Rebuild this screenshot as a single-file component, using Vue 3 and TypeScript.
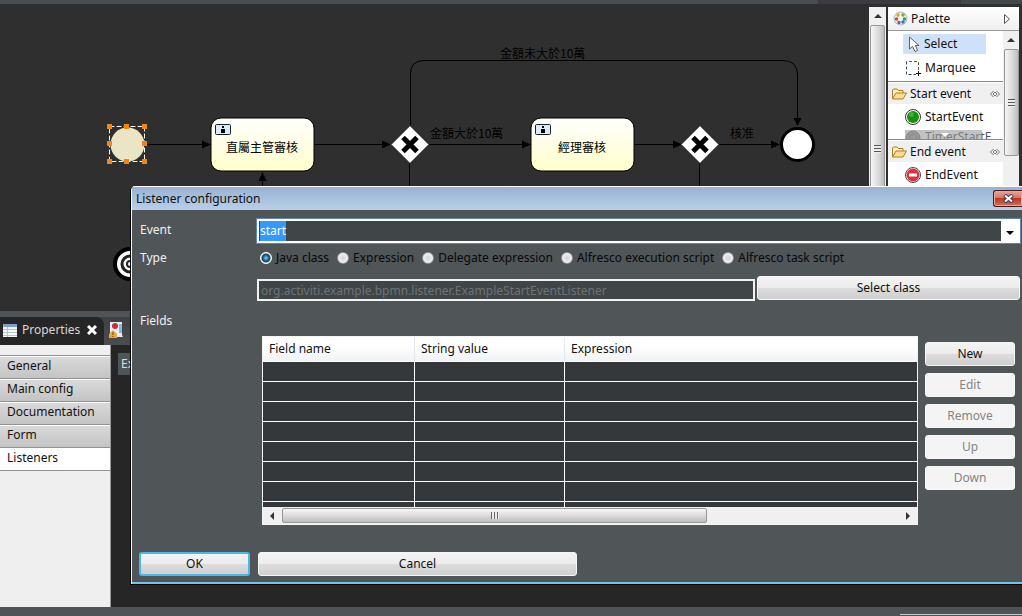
<script setup lang="ts">
import { onMounted, ref } from 'vue'

const eventName = ref('start')
const eventInput = ref<HTMLInputElement | null>(null)
const listenerType = ref('Java class')
const className = ref('org.activiti.example.bpmn.listener.ExampleStartEventListener')

const listenerTypes: string[] = [
  'Java class',
  'Expression',
  'Delegate expression',
  'Alfresco execution script',
  'Alfresco task script',
]
const sections: string[] = ['General', 'Main config', 'Documentation', 'Form', 'Listeners']
const columns: string[] = ['Field name', 'String value', 'Expression']
const actions: { label: string; enabled: boolean }[] = [
  { label: 'New', enabled: true },
  { label: 'Edit', enabled: false },
  { label: 'Remove', enabled: false },
  { label: 'Up', enabled: false },
  { label: 'Down', enabled: false },
]
const handles: [number, number][] = [
  [109, 126], [126, 126], [144, 126],
  [109, 143], [144, 143],
  [109, 161], [126, 161], [144, 161],
]
const tasks: { x: number; label: string }[] = [
  { x: 211, label: '直屬主管審核' },
  { x: 531, label: '經理審核' },
]
const gateways: number[] = [410, 700]
const arrows: string[] = [
  'M211 144.500l-9-4v8z', 'M391 144.500l-9-4v8z', 'M531 144.500l-9-4v8z',
  'M682 144.500l-9-4v8z', 'M780 144.500l-9-4v8z', 'M797.500 126l-4-8h8z', 'M262.500 172l-4 9h8z',
]

onMounted(() => {
  eventInput.value?.focus()
  eventInput.value?.select()
})
</script>

<template>
  <div class="workbench">
    <div class="top-strip"></div>
    <main class="editor">
      <svg class="canvas" role="img" aria-label="Process diagram">
        <defs>
          <linearGradient id="taskFill" x1="0" y1="0" x2="0" y2="1">
            <stop offset="0" stop-color="#ffffff" />
            <stop offset="1" stop-color="#ffffcc" />
          </linearGradient>
        </defs>
        <g transform="translate(0 -4)">
          <g fill="none" stroke="#000">
            <path d="M145 144.500H205M315 144.500H385M428 144.500H525M635 144.500H676M718 144.500H775" />
            <path d="M410.500 126V74Q410.500 60.500 424 60.500H783Q797.500 60.500 797.500 75V120" />
            <path d="M409.500 162V200M699.500 162V200M262.500 178V200" />
          </g>
          <path v-for="a in arrows" :key="a" :d="a" />
          <circle cx="127.500" cy="144.500" r="17" fill="#e9e5c5" />
          <rect x="109.500" y="126.500" width="35" height="35" fill="none" stroke="#111" />
          <rect x="109.500" y="126.500" width="35" height="35" fill="none" stroke="#fff" stroke-dasharray="5 2" />
          <rect v-for="h in handles" :key="h.join()" :x="h[0] - 2" :y="h[1] - 2" width="5" height="5" fill="#f28516" />
          <g v-for="t in tasks" :key="t.x">
            <rect :x="t.x" y="118" width="103" height="53" rx="10" fill="url(#taskFill)" stroke="#000" />
            <rect :x="t.x + 4.500" y="124.500" width="15" height="10" rx="1" fill="#dcebf6" stroke="#17232c" />
            <path :transform="`translate(${t.x + 12} 126)`" d="M-1 0h2v2h-2zM-2 3h4v4h-4z" />
            <text :x="t.x + 51" y="152" text-anchor="middle">{{ t.label }}</text>
          </g>
          <g v-for="g in gateways" :key="g" :transform="`translate(${g} 144.500)`">
            <path d="M0-19L19 0L0 19L-19 0z" fill="#fff" stroke="#111" />
            <path d="M-7-7L7 7M7-7L-7 7" stroke="#000" stroke-width="5" />
          </g>
          <circle cx="797.500" cy="144.500" r="16" fill="#fff" stroke="#000" stroke-width="3" />
          <g fill="none" stroke="#000">
            <circle cx="130" cy="264" r="15" fill="#fff" stroke-width="4" />
            <circle cx="130" cy="264" r="8" stroke="#222" stroke-width="3" />
            <circle cx="130" cy="264" r="3" stroke="#222" stroke-width="2" />
          </g>
          <text x="500" y="58">金額未大於10萬</text>
          <text x="430" y="138">金額大於10萬</text>
          <text x="730" y="138">核准</text>
        </g>
      </svg>

      <div class="vbar canvas-bar">
        <span class="arrow up"></span>
        <span class="thumb"><i class="grip"></i></span>
      </div>

      <aside class="palette">
        <header class="palette-head">
          <svg width="15" height="15" viewBox="0 0 15 15">
            <circle cx="7.500" cy="7.500" r="6.500" fill="#f2f5f7" stroke="#a9b8c4" />
            <g fill="none" stroke-width="1.500">
              <circle cx="5" cy="4" r="1" stroke="#e0a020" />
              <circle cx="10" cy="4" r="1" stroke="#7fa821" />
              <circle cx="3.500" cy="8" r="1" stroke="#d4442c" />
              <circle cx="11.500" cy="8" r="1" stroke="#2f9a4c" />
              <circle cx="6" cy="11.500" r="1" stroke="#7a4fa8" />
              <circle cx="10" cy="11" r="1" stroke="#2c72c4" />
            </g>
          </svg>
          <span>Palette</span>
          <svg class="push" width="8" height="12" viewBox="0 0 8 12"><path d="M1.500 1.500V10.500L6.500 6z" fill="#fff" stroke="#555" /></svg>
        </header>
        <div class="palette-body">
          <div class="drawers">
            <ul class="tools">
              <li class="tool active">
                <svg width="12" height="16" viewBox="0 0 12 16"><path d="M1.500 1V13L4.500 10.500L7 15.500L9.500 14.500L7.500 9.500H11z" fill="#fff" stroke="#665f50" /></svg>
                <span>Select</span>
              </li>
              <li class="tool">
                <svg width="16" height="16" viewBox="0 0 16 16">
                  <path d="M13.500 10V1.500H1.500" fill="none" stroke="#7a6030" stroke-dasharray="3 2" />
                  <path d="M1.500 1.500V14.500H11" fill="none" stroke="#2b4a6a" stroke-dasharray="3 2" />
                  <path d="M13.500 11v5M11 13.500h5" stroke="#111" />
                </svg>
                <span>Marquee</span>
              </li>
            </ul>
            <section class="start-drawer">
              <h2>
                <svg width="15" height="12" viewBox="0 0 15 12"><path d="M.5 10.500V2L1.500 1H5L6.500 2.500H11V5" fill="#fff0c0" stroke="#b57a25" /><path d="M.5 11L4 5H14.500L11 11z" fill="#ffdf94" stroke="#b57a25" /></svg>
                <span>Start event</span>
                <svg class="push" width="10" height="8" viewBox="0 0 10 8"><path d="M3.500 1L.5 4L3.500 7M6.500 1L9.500 4L6.500 7M3 4L5 2L7 4L5 6z" fill="none" stroke="#777" /></svg>
              </h2>
              <div class="tool">
                <svg width="16" height="16" viewBox="0 0 16 16"><circle cx="8" cy="8" r="7.500" fill="#fff" stroke="#333" /><circle cx="8" cy="8" r="6" fill="#15930f" /><circle cx="6.500" cy="5.500" r="2.500" fill="#3eb032" /></svg>
                <span>StartEvent</span>
              </div>
              <div class="tool clipped">
                <svg width="16" height="16" viewBox="0 0 16 16"><circle cx="8" cy="8" r="7" fill="#999" stroke="#666" /><circle cx="8" cy="8" r="4" fill="none" stroke="#777" /></svg>
                <span>TimerStartE</span>
                <i class="more"></i>
              </div>
            </section>
            <section>
              <h2>
                <svg width="15" height="12" viewBox="0 0 15 12"><path d="M.5 10.500V2L1.500 1H5L6.500 2.500H11V5" fill="#fff0c0" stroke="#b57a25" /><path d="M.5 11L4 5H14.500L11 11z" fill="#ffdf94" stroke="#b57a25" /></svg>
                <span>End event</span>
                <svg class="push" width="10" height="8" viewBox="0 0 10 8"><path d="M3.500 1L.5 4L3.500 7M6.500 1L9.500 4L6.500 7M3 4L5 2L7 4L5 6z" fill="none" stroke="#777" /></svg>
              </h2>
              <div class="tool">
                <svg width="16" height="16" viewBox="0 0 16 16"><circle cx="8" cy="8" r="7.500" fill="#fff" stroke="#444" /><circle cx="8" cy="8" r="6.500" fill="#dc3040" /><path d="M4 8H12" stroke="#fff" stroke-width="3" /></svg>
                <span>EndEvent</span>
              </div>
            </section>
          </div>
          <div class="vbar palette-bar">
            <span class="arrow up"></span>
            <span class="thumb"><i class="grip"></i></span>
          </div>
        </div>
      </aside>
    </main>

    <section class="views">
      <header class="tabs">
        <div class="tab current">
          <svg width="14" height="13" viewBox="0 0 14 13"><path d="M0 0H14V13H0z" fill="#f4f6f8" /><path d="M0 0H14V3H0z" fill="#7f9cd4" /><path d="M0 5.500H14M0 8.500H14M0 11.500H14M4.500 3V13" stroke="#b8c4d4" /></svg>
          <span>Properties</span>
          <svg width="10" height="10" viewBox="0 0 10 10"><path d="M1 1L9 9M9 1L1 9" stroke="#fff" stroke-width="3" /></svg>
        </div>
        <div class="tab">
          <svg width="15" height="17" viewBox="0 0 15 17"><path d="M1 0H13V13L14 15H8L1 12z" fill="#e6eef6" /><path d="M10 2h3v9h-3z" fill="#8fb4dc" /><circle cx="6" cy="4" r="3" fill="#d42a35" /><path d="M4 8L8 12V16H0V12z" fill="#e9a93a" /><path d="M4 10v3M4 14v1" stroke="#704000" /></svg>
        </div>
      </header>
      <div class="view-body">
        <nav class="sections">
          <a v-for="s in sections" :key="s" href="#" :class="{ selected: s === 'Listeners' }">{{ s }}</a>
        </nav>
        <span class="behind">Execution listeners</span>
      </div>
    </section>
    <footer class="status"><span></span></footer>

    <form class="dialog" role="dialog" aria-labelledby="dialog-title" @submit.prevent>
      <header class="title-bar">
        <span id="dialog-title">Listener configuration</span>
        <button type="button" class="close" aria-label="Close">
          <svg width="11" height="9" viewBox="0 0 11 9"><path d="M1.500 1L9.500 8M9.500 1L1.500 8" stroke="#4a3450" stroke-width="4" /><path d="M2 1.500L9 7.500M9 1.500L2 7.500" stroke="#fff" stroke-width="2" /></svg>
        </button>
      </header>
      <div class="dialog-body">
        <label class="caption event-caption" for="event">Event</label>
        <div class="combo">
          <input id="event" ref="eventInput" v-model="eventName" type="text" />
          <button type="button" aria-label="Show events"><i></i></button>
        </div>

        <span id="type-caption" class="caption type-caption">Type</span>
        <div class="types" role="radiogroup" aria-labelledby="type-caption">
          <label v-for="t in listenerTypes" :key="t">
            <input v-model="listenerType" type="radio" name="type" :value="t" />{{ t }}
          </label>
        </div>

        <div class="class-row">
          <input v-model="className" type="text" aria-label="Java class name" disabled />
          <button type="button" class="btn">Select class</button>
        </div>

        <span class="caption fields-caption">Fields</span>
        <div class="fields">
          <div class="grid-box">
            <div class="grid-view">
              <table aria-label="Fields">
                <colgroup><col class="c1" /><col class="c2" /><col /></colgroup>
                <thead>
                  <tr><th v-for="c in columns" :key="c" scope="col">{{ c }}</th></tr>
                </thead>
                <tbody>
                  <tr v-for="n in 8" :key="n"><td></td><td></td><td></td></tr>
                </tbody>
              </table>
            </div>
            <div class="hbar">
              <span class="arrow left"></span>
              <div class="track"><span class="thumb"><i class="grip"></i></span></div>
              <span class="arrow right"></span>
            </div>
          </div>
          <div class="actions">
            <button v-for="a in actions" :key="a.label" type="button" class="btn" :disabled="!a.enabled">{{ a.label }}</button>
          </div>
        </div>
      </div>
      <footer class="dialog-foot">
        <button type="submit" class="btn ok">OK</button>
        <button type="button" class="btn cancel">Cancel</button>
      </footer>
    </form>
  </div>
</template>

<style>
body {
  margin: 0;
}
</style>

<style scoped>
.workbench {
  position: relative;
  display: flex;
  flex-direction: column;
  min-height: 100vh;
  overflow: hidden;
  background: #2f2f2f;
  font: 12px/20px "Noto Sans", "Noto Sans CJK TC", sans-serif;
  color: #111;
}
.workbench * {
  box-sizing: border-box;
}
input,
button {
  font: inherit;
  margin: 0;
}
.top-strip {
  height: 4px;
  background: linear-gradient(90deg, #4b4e50 80%, #3a3c3f 80% 94%, #45484a 94%);
}
.editor {
  display: flex;
  height: 307px;
  padding-right: 3px;
}
.canvas {
  flex: 1;
  min-width: 0;
  height: 100%;
  font: 12px "Noto Sans CJK TC", sans-serif;
}

/* scroll bars */
.vbar {
  display: flex;
  flex-direction: column;
  align-items: center;
  background: #f0f0f0;
}
.thumb {
  display: flex;
  align-items: center;
  justify-content: center;
  border: 1px solid #979797;
  border-radius: 2px;
}
.vbar .thumb {
  background: linear-gradient(90deg, #f6f6f6, #d8d8d8 60%, #bdbdbd);
}
.vbar .grip {
  width: 7px;
  height: 8px;
  background: repeating-linear-gradient(#555 0 1px, #eee 1px 3px);
}
.arrow {
  border: 4px solid transparent;
}
.arrow.up {
  border-top: 0;
  border-bottom-color: #333;
}
.arrow.left {
  border-left: 0;
  border-right-color: #333;
}
.arrow.right {
  border-right: 0;
  border-left-color: #333;
}
.canvas-bar {
  width: 17px;
  margin: 3px 2px 0 0;
  padding-top: 7px;
  gap: 7px;
}
.canvas-bar .thumb {
  width: 15px;
  height: 247px;
}

/* palette */
.palette {
  width: 131px;
  margin-top: 3px;
  background: #fff;
}
.palette-head {
  display: flex;
  align-items: center;
  gap: 3px;
  height: 24px;
  padding: 0 8px 0 5px;
  border-bottom: 1px solid #999;
  background: linear-gradient(#fff, #f0f0f0);
}
.push {
  margin-left: auto;
}
.palette-body {
  display: flex;
}
.drawers {
  flex: 1;
  min-width: 0;
}
.palette-bar {
  width: 16px;
  height: 276px;
  padding-top: 7px;
  gap: 7px;
}
.palette-bar .thumb {
  width: 15px;
  height: 107px;
}
.tools {
  margin: 0;
  padding: 3px 0 2px;
  list-style: none;
  border-bottom: 1px solid #888;
}
.tool {
  display: flex;
  align-items: center;
  gap: 4px;
  height: 23px;
  margin: 0 0 0 17px;
}
.tool.active {
  height: 20px;
  margin: 0 17px 2px 15px;
  padding-left: 5px;
  background: #cfe1f8;
}
.drawers h2 {
  display: flex;
  align-items: center;
  gap: 3px;
  height: 21px;
  margin: 1px 0;
  padding: 0 3px 0 4px;
  font: inherit;
  background: #f0f0f0;
}
.start-drawer {
  border-bottom: 1px solid #888;
}
.clipped {
  position: relative;
  align-items: flex-start;
  height: 9px;
  margin: 2px 2px 0 17px;
  overflow: hidden;
  line-height: 14px;
  color: #555;
}
.clipped::after {
  content: "";
  position: absolute;
  inset: 0 19px 0 0;
  background: #999;
  opacity: 0.6;
}
.more {
  position: absolute;
  left: 36px;
  top: 3px;
  z-index: 1;
  border: 4px solid transparent;
  border-top-color: #fff;
}

/* properties view */
.views {
  flex: 1;
  display: flex;
  flex-direction: column;
  background: #262626;
}
.tabs {
  display: flex;
  height: 34px;
  padding-top: 6px;
  background: linear-gradient(#505355 0 6px, #3e4043 6px, #4b4d50);
}
.tab {
  display: flex;
  align-items: center;
  padding: 0 5px 2px;
}
.tab.current {
  gap: 5px;
  padding: 0 7px 2px 3px;
  border-radius: 0 8px 0 0;
  background: #262626;
  color: #d8d8d8;
}
.tab.current span {
  padding-right: 2px;
}
.view-body {
  flex: 1;
  display: flex;
  align-items: flex-start;
  gap: 7px;
}
.sections {
  display: flex;
  flex-direction: column;
  align-self: stretch;
  width: 111px;
  padding-top: 10px;
  background: #efefef;
  border-right: 1px solid #999;
}
.sections a {
  height: 23px;
  padding-left: 7px;
  border-top: 1px solid #929292;
  box-shadow: inset 0 1px #fff;
  background: linear-gradient(#dadada, #c4c4c4);
  color: #111;
  text-decoration: none;
}
.sections a.selected {
  height: 24px;
  border-bottom: 1px solid #929292;
  background: #fff;
}
.behind {
  margin-top: 8px;
  padding: 1px 3px;
  background: #505557;
  color: #ddd;
  white-space: nowrap;
}
.status {
  display: flex;
  justify-content: flex-end;
  height: 9px;
  padding-top: 7px;
  background: #505355;
}
.status span {
  width: 122px;
  border-top: 1px solid #ccc;
}

/* dialog */
.dialog {
  position: absolute;
  left: 130px;
  top: 186px;
  right: 0;
  border-left: 1px solid #000;
  border-bottom: 1px solid #000;
  border-top-left-radius: 5px;
  background: #505557;
  overflow: hidden;
  box-shadow: inset 1px 0 #f4f8fb, inset 0 -2px #70c6e8;
}
.title-bar {
  display: flex;
  align-items: center;
  justify-content: space-between;
  height: 24px;
  padding-left: 4px;
  border-top: 1px solid #fff;
  border-left: 1px solid #fff;
  background: linear-gradient(#98b3d2, #b8cfe9);
}
.close {
  display: flex;
  align-items: center;
  justify-content: center;
  width: 29px;
  height: 17px;
  border: 1px solid #4b1a1e;
  border-right: 0;
  border-radius: 3px 0 0 3px;
  background: linear-gradient(#e8a596, #d47767 45%, #b73a26 50%, #d0705a);
  box-shadow: inset 0 0 0 1px #eaa79b;
}
.dialog-body {
  display: grid;
  grid-template-columns: 118px 1fr;
  padding: 9px 2px 0 8px;
}
.caption {
  padding-left: 1px;
  color: #f0f0f0;
}
.event-caption {
  padding-top: 1px;
}
.type-caption {
  padding-top: 5px;
}
.combo {
  display: flex;
  height: 24px;
  border: 2px solid #fff;
  outline: 1px solid #5f87ae;
  background: #404547;
}
.combo input {
  flex: 1;
  min-width: 0;
  padding: 0 1px;
  border: 0;
  outline: 0;
  background: transparent;
  color: #fff;
}
.combo input::selection {
  background: #3399ff;
  color: #fff;
}
.combo button {
  width: 17px;
  padding: 4px 0 0 5px;
  border: 0;
  background: #fff;
}
.combo i {
  display: block;
  width: 0;
  border: 4px solid transparent;
  border-top-color: #000;
  border-bottom: 0;
}
.types {
  display: flex;
  gap: 8px;
  height: 34px;
  padding: 5px 0 0 3px;
}
.types label {
  display: flex;
  align-items: center;
  gap: 4px;
  height: 20px;
  color: #080808;
  white-space: nowrap;
}
.types input {
  appearance: none;
  width: 12px;
  height: 12px;
  border: 1px solid #8e9294;
  border-radius: 50%;
  background: radial-gradient(#d2d4d5, #fff);
}
.types input:checked {
  border-color: #fff;
  background: radial-gradient(circle at 5px 5px, #9edcf2 0, #2682a8 2px, #123f59 4px, #e5ecef 5px);
}
.class-row {
  grid-column: 2;
  display: grid;
  grid-template-columns: 498fr 263fr;
  gap: 2px;
  align-items: start;
}
.class-row input {
  height: 22px;
  min-width: 0;
  margin-top: 2px;
  padding: 0 2px;
  border: 2px solid #f2f2f2;
  background: #404547;
  color: #6f7375;
}
.class-row .btn {
  margin-top: -1px;
}
.btn {
  height: 24px;
  padding: 0;
  border: 1px solid #f6f6f6;
  border-radius: 3px;
  background: linear-gradient(#f3f3f3, #ececec 50%, #dddddd 50%, #cfcfcf);
  color: #111;
}
.btn:disabled {
  background: #f4f4f4;
  color: #858585;
}
.fields-caption {
  padding-top: 10px;
}
.fields {
  grid-column: 2;
  display: flex;
  gap: 7px;
  padding: 35px 5px 0;
}
.grid-box {
  flex: 1;
  min-width: 0;
  border: 1px solid #f4f4f4;
  background: #f0f0f0;
}
.grid-view {
  height: 170px;
  overflow: hidden;
}
table {
  width: 100%;
  table-layout: fixed;
  border-collapse: separate;
  border-spacing: 0;
  background: #34383a;
}
.c1 {
  width: 152px;
}
.c2 {
  width: 150px;
}
th {
  height: 25px;
  padding: 0 6px;
  border-bottom: 1px solid #fff;
  border-right: 1px solid #e3e8ee;
  background: linear-gradient(#fff 40%, #f1f2f4);
  font-weight: 400;
  text-align: left;
}
td {
  height: 20px;
  padding: 0;
  border-right: 1px solid #fff;
  border-bottom: 1px solid #fff;
}
td:last-child,
th:last-child {
  border-right: 0;
}
.hbar {
  display: flex;
  align-items: center;
  height: 17px;
  padding: 0 7px;
}
.track {
  flex: 1;
  padding: 0 8px;
}
.hbar .thumb {
  width: 69%;
  height: 15px;
  background: linear-gradient(#f6f6f6, #dcdcdc 50%, #bdbdbd);
}
.hbar .grip {
  width: 8px;
  height: 7px;
  background: repeating-linear-gradient(90deg, #666 0 1px, #eee 1px 3px);
}
.actions {
  display: flex;
  flex-direction: column;
  gap: 7px;
  width: 90px;
  padding-top: 6px;
}
.dialog-foot {
  display: flex;
  gap: 8px;
  padding: 27px 0 8px 8px;
}
.ok {
  width: 111px;
  border: 2px solid #4bb8ec;
}
.cancel {
  width: 319px;
}
</style>
